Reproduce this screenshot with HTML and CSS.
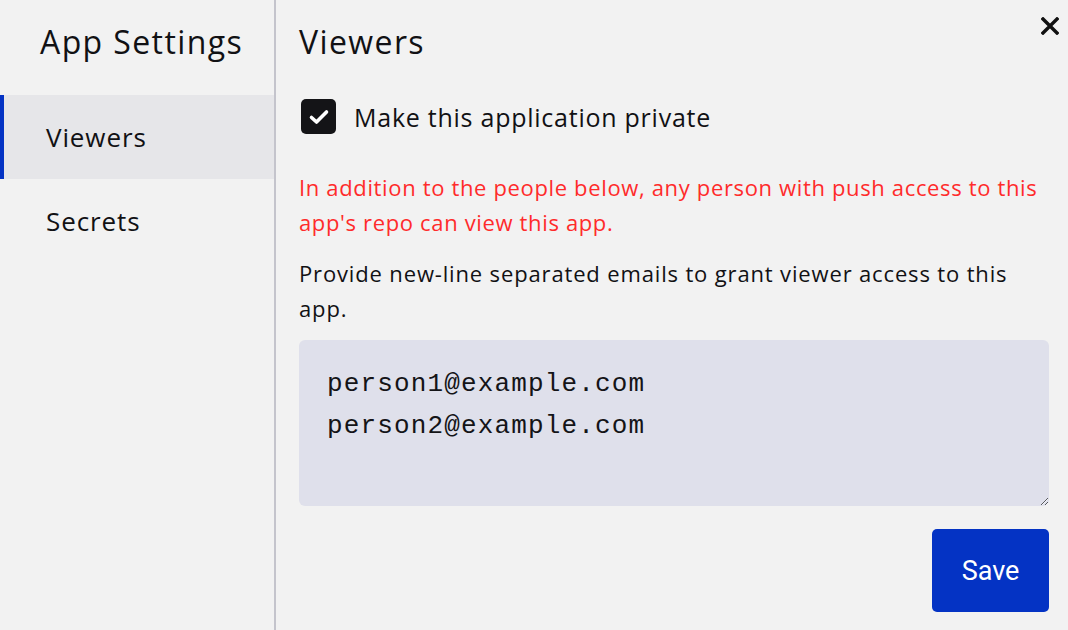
FILE: index.html
```html
<!DOCTYPE html>
<html>
<head>
<meta charset="utf-8">
<link rel="stylesheet" href="styles.css">
</head>
<body>
<div class="app">
  <aside class="sidebar">
    <h1 class="side-title">App Settings</h1>
    <nav class="menu">
      <div class="menu-item active">Viewers</div>
      <div class="menu-item">Secrets</div>
    </nav>
  </aside>
  <main class="content">
    <div class="header">
      <h2 class="title">Viewers</h2>
      <button class="close" aria-label="Close">
        <svg width="18" height="18" viewBox="0 0 18 18"><path d="M2 2 L16 16 M16 2 L2 16" stroke="#111" stroke-width="3.4" stroke-linecap="square"/></svg>
      </button>
    </div>
    <label class="check-row">
      <span class="checkbox">
        <svg width="22" height="18" viewBox="0 0 22 18"><path d="M3.5 9.5 L8.5 14 L18.5 4" fill="none" stroke="#fff" stroke-width="3.6" stroke-linecap="round" stroke-linejoin="round"/></svg>
      </span>
      <span class="check-label">Make this application private</span>
    </label>
    <p class="warning">In addition to the people below, any person with push access to this app's repo can view this app.</p>
    <p class="help">Provide new-line separated emails to grant viewer access to this app.</p>
    <textarea class="emails">person1@example.com
person2@example.com</textarea>
    <div class="actions">
      <button class="save">Save</button>
    </div>
  </main>
</div>
</body>
</html>
```

FILE: styles.css
```css
html, body {
  margin: 0;
  padding: 0;
  background: #f2f2f2;
  font-family: "Open Sans", "Noto Sans", sans-serif;
  color: #111114;
}
.app {
  display: flex;
  width: 1068px;
  height: 630px;
  overflow: hidden;
}
.sidebar {
  width: 274px;
  flex: none;
  border-right: 2px solid #c4c4cc;
}
.side-title {
  margin: 0;
  padding: 21px 0 0 40px;
  height: 95px;
  box-sizing: border-box;
  font-size: 32px;
  font-weight: 400;
  line-height: 42px;
  letter-spacing: 1.4px;
}
.menu-item {
  height: 84px;
  display: flex;
  align-items: center;
  padding-left: 46px;
  font-size: 26px;
  letter-spacing: 0.9px;
  box-sizing: border-box;
}
.menu-item.active {
  background: #e6e6e9;
  border-left: 4px solid #0433c4;
  padding-left: 42px;
}
.content {
  flex: 1;
  padding: 0 19px 0 23px;
  display: flex;
  flex-direction: column;
}
.header {
  display: flex;
  justify-content: space-between;
  align-items: flex-start;
  padding-top: 21px;
}
.title {
  margin: 0;
  font-size: 32px;
  font-weight: 400;
  line-height: 42px;
  letter-spacing: 1.4px;
}
.close {
  border: 0;
  background: none;
  padding: 0;
  margin: -4px -10px 0 0;
  cursor: pointer;
}
.check-row {
  display: flex;
  align-items: center;
  margin-top: 36px;
  gap: 18px;
  padding-left: 2px;
}
.checkbox {
  width: 35px;
  height: 35px;
  background: #141417;
  border-radius: 5px;
  display: flex;
  align-items: center;
  justify-content: center;
}
.check-label {
  font-size: 25px;
  letter-spacing: 0.75px;
}
.warning {
  margin: 36px 0 0;
  color: #ff2b2b;
  font-size: 22px;
  line-height: 35px;
  letter-spacing: 0.65px;
}
.help {
  margin: 16px 0 0;
  font-size: 22px;
  line-height: 35px;
  letter-spacing: 0.85px;
}
.emails {
  margin-top: 14px;
  height: 166px;
  box-sizing: border-box;
  border: 0;
  border-radius: 6px;
  background: #dfe0eb;
  padding: 23px 28px 22px;
  font-family: "Liberation Mono", "DejaVu Sans Mono", monospace;
  font-size: 26px;
  letter-spacing: 1.15px;
  line-height: 42px;
  color: #141417;
  resize: vertical;
  outline: none;
}
.actions {
  display: flex;
  justify-content: flex-end;
  margin-top: 23px;
}
.save {
  width: 117px;
  height: 83px;
  border: 0;
  border-radius: 5px;
  background: #0433c4;
  color: #fff;
  font-family: "Liberation Sans Narrow", "Roboto", sans-serif;
  font-size: 27px;
}
```
